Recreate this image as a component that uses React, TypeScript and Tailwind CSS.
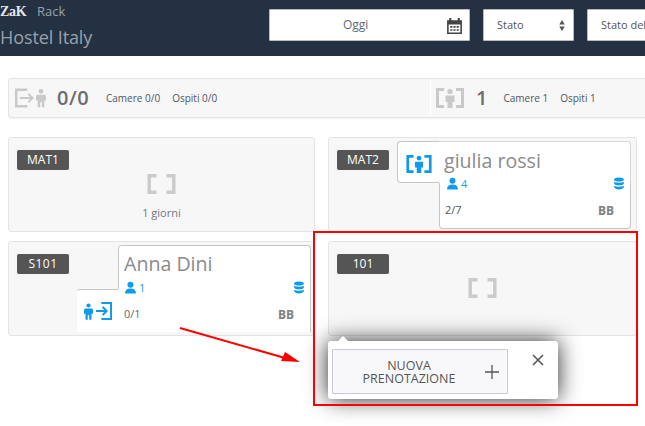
const font = "font-['Open_Sans',sans-serif]";

function Bracket({ className = "" }: { className?: string }) {
  return (
    <svg viewBox="0 0 28 20" className={className} fill="none" stroke="currentColor" strokeWidth="3.400">
      <path d="M9 1.700H1.700v16.600H9M19 1.700h7.300v16.600H19" />
    </svg>
  );
}

function PersonSolid({ className = "" }: { className?: string }) {
  return (
    <svg viewBox="0 0 12 22" className={className} fill="currentColor">
      <circle cx="6" cy="3" r="2.800" />
      <path d="M2 7h8a2 2 0 0 1 2 2v5h-2v8H7v-6H5v6H2v-8H0V9a2 2 0 0 1 2-2z" />
    </svg>
  );
}

function RoomIn({ className = "" }: { className?: string }) {
  return (
    <svg viewBox="0 0 28 20" className={className} fill="currentColor">
      <path d="M8 1.500H1.500v17H8M20 1.500h6.500v17H20" fill="none" stroke="currentColor" strokeWidth="3" />
      <circle cx="14" cy="3.500" r="2.600" />
      <path d="M9.500 7.500h9v6.500h-2V20h-5v-6h-2z" />
    </svg>
  );
}

function DoorOut({ className = "" }: { className?: string }) {
  return (
    <svg viewBox="0 0 20 20" className={className} fill="none" stroke="currentColor" strokeWidth="2.600">
      <path d="M13 1.300H1.300v17.400H13" />
      <path d="M5 10h13M14 5.500l4.500 4.500-4.500 4.500" strokeWidth="2" />
    </svg>
  );
}

function DoorIn({ className = "" }: { className?: string }) {
  return (
    <svg viewBox="0 0 18 20" className={className} fill="none" stroke="currentColor" strokeWidth="2.200">
      <path d="M6 1.100h10.900v17.800H6" />
      <path d="M0 10h12M7.500 5.500l4.500 4.500-4.500 4.500" />
    </svg>
  );
}

function User({ className = "" }: { className?: string }) {
  return (
    <svg viewBox="0 0 12 13" className={className} fill="currentColor">
      <circle cx="6" cy="3.500" r="3.300" />
      <path d="M0 13c0-3.500 2-5.500 6-5.500s6 2 6 5.500z" />
    </svg>
  );
}

function Stack({ className = "" }: { className?: string }) {
  return (
    <svg viewBox="0 0 10 12" className={className} fill="currentColor">
      <ellipse cx="5" cy="2" rx="4.800" ry="2" />
      <path d="M.2 4c1 1.600 8.600 1.600 9.600 0v2.200c-1 2-8.600 2-9.600 0zM.2 8c1 1.600 8.600 1.600 9.600 0v1.800C8.800 12.600 1.200 12.600.2 9.800z" />
    </svg>
  );
}

function Label({ text, wide = false }: { text: string; wide?: boolean }) {
  return (
    <div className="flex h-5 w-[52px] items-center justify-center rounded-[2px] bg-[#555] text-[12px] text-white">
      <span className={wide ? "tracking-[0.5px]" : ""}>{text}</span>
    </div>
  );
}

function Stats() {
  return (
    <div className="mx-2 mt-[22px] flex h-10 w-[660px] items-center rounded-[3px] border border-[#e4e4e4] bg-[#f7f7f7] shadow-[0_1px_1px_rgba(0,0,0,0.05)]">
      <div className="flex h-full w-[422px] shrink-0 items-center border-r border-white pl-[6px]">
        <DoorOut className="h-[20px] w-[19px] text-[#c9c9c9]" />
        <PersonSolid className="ml-[2px] h-[20px] w-[10px] text-[#c9c9c9]" />
        <span className="ml-[11px] w-[39px] text-[20px] font-semibold tracking-[0.5px] text-[#6d6d6d]">0/0</span>
        <span className="ml-[10px] text-[10px] text-[#4f5660]">Camere 0/0</span>
        <span className="ml-[12px] text-[10px] text-[#4f5660]">Ospiti 0/0</span>
      </div>
      <div className="flex items-center pl-[5px]">
        <RoomIn className="h-[20px] w-[28px] text-[#c9c9c9]" />
        <span className="ml-[12px] text-[20px] font-semibold text-[#6d6d6d]">1</span>
        <span className="ml-[16px] text-[10px] text-[#4f5660]">Camere 1</span>
        <span className="ml-[12px] text-[10px] text-[#4f5660]">Ospiti 1</span>
      </div>
    </div>
  );
}

function EmptyCard({ label, days }: { label: string; days?: string }) {
  return (
    <div className="flex h-[95px] flex-col rounded-[3px] border border-[#e4e4e4] bg-[#f7f7f7] pl-2 pt-3">
      <Label text={label} />
      <div className="flex flex-1 flex-col items-center pr-2 pt-1">
        <Bracket className="h-5 w-[29px] text-[#cbcbcb]" />
        {days && <span className="mt-[11px] text-[11px] text-[#6f7780]">{days}</span>}
      </div>
    </div>
  );
}

function MetaRow({ count }: { count: number }) {
  return (
    <div className="flex items-start pl-[7px] pr-[6px] text-[11px] leading-[13px] text-[#1a9fef]">
      <User className="h-[13px] w-[11px] text-[#0e9bec]" />
      <span className="ml-[3px]">{count}</span>
      <Stack className="ml-auto h-[13px] w-[10px] text-[#0e9bec]" />
    </div>
  );
}

function MatTwo() {
  return (
    <div className="flex h-[95px] rounded-[3px] border border-[#e4e4e4] bg-[#f7f7f7] pt-[3px]">
      <div className="pl-2 pt-[9px]">
        <Label text="MAT2" />
      </div>
      <div className="ml-[8px] grid h-[88px] w-[234px] grid-cols-[42px_1fr] grid-rows-[42px_1fr]">
        <div className="flex items-center justify-center rounded-l-[4px] border-y border-l border-[#c6c6c6] bg-white pt-[3px]">
          <RoomIn className="h-[18px] w-[26px] text-[#0e9bec]" />
        </div>
        <div className="rounded-tr-[4px] border-r border-t border-[#d8d8d8] bg-white pl-[5px] pt-[5px]">
          <div className="text-[19.600px] leading-[28px] text-[#8b8b8b]">giulia rossi</div>
        </div>
        <div className="relative col-start-2 rounded-b-[4px] border-x border-b border-[#c6c6c6] bg-white">
          <div className="-mt-[6px]">
            <MetaRow count={4} />
          </div>
          <div className="mt-[13px] flex items-center justify-between pl-[5px] pr-[16px]">
            <span className="-translate-y-[1px] text-[11px] leading-[16px] text-[#555]">2/7</span>
            <span className="text-[12px] font-bold leading-[16px] text-[#808080]">BB</span>
          </div>
        </div>
      </div>
    </div>
  );
}

function S101() {
  return (
    <div className="flex h-[95px] rounded-[3px] border border-[#e4e4e4] bg-[#f7f7f7] pt-[3px]">
      <div className="pl-2 pt-[9px]">
        <Label text="S101" wide />
      </div>
      <div className="ml-[8px] grid h-[87px] w-[234px] grid-cols-[41px_1fr] grid-rows-[44px_1fr]">
        <div className="col-start-2 rounded-t-[4px] border-x border-t border-[#c6c6c6] bg-white pl-[5px] pt-[3px]">
          <div className="text-[19.600px] leading-[30px] text-[#8b8b8b]">Anna Dini</div>
        </div>
        <div className="col-start-1 row-start-2 flex items-center rounded-tl-[3px] border-t border-[#c6c6c6] bg-white pl-[7px]">
          <PersonSolid className="h-[19px] w-[9px] text-[#0e9bec]" />
          <DoorIn className="ml-[3px] h-[18px] w-[16px] text-[#0e9bec]" />
        </div>
        <div className="col-start-2 row-start-2 border-r border-[#c6c6c6] bg-white">
          <div className="-mt-[8px]">
            <MetaRow count={1} />
          </div>
          <div className="mt-[13px] flex items-center justify-between pl-[6px] pr-[16px]">
            <span className="-translate-y-[1px] text-[11px] leading-[16px] text-[#666]">0/1</span>
            <span className="text-[12px] font-bold leading-[16px] text-[#808080]">BB</span>
          </div>
        </div>
      </div>
    </div>
  );
}

export default function App() {
  return (
    <div className={`relative h-[426px] w-[645px] overflow-hidden bg-white ${font}`}>
      <header className="flex h-14 bg-[#233143]">
        <div className="w-[269px] shrink-0 pt-[5px] leading-none text-[#9aa1a9]">
          <div className="flex items-baseline">
            <span className="w-[25px] font-['Liberation_Serif',serif] text-[14px] font-bold tracking-[-0.3px] text-[#e8e8e8]">ZaK</span>
            <span className="ml-[12px] text-[13px]">Rack</span>
          </div>
          <div className="mt-[9px] text-[18px] tracking-[-0.1px]">Hostel Italy</div>
        </div>
        <div className="flex items-start gap-[13px] pt-[9px]">
          <div className="flex h-8 w-[201px] items-center rounded-[1px] border border-[#bbb] bg-white pl-[73px] pr-[6px] text-[12px] text-[#5f6a76]">
            Oggi
            <svg viewBox="0 0 16 16" className="ml-auto h-[17px] w-[17px] text-[#444]" fill="currentColor">
              <path d="M1 3h2V1h2v2h6V1h2v2h2v13H1zm1.500 4v7.500h11V7zM4 8.500h2V10H4zm3 0h2V10H7zm3 0h2V10h-2zm-6 3h2V13H4zm3 0h2V13H7zm3 0h2V13h-2z" fillRule="evenodd" />
            </svg>
          </div>
          <div className="flex h-8 w-[91px] items-center rounded-[1px] border border-[#bbb] bg-white pl-[13px] pr-[8px] text-[11px] text-[#555]">
            Stato
            <svg viewBox="0 0 6 12" className="ml-auto h-[11px] w-[6px] text-[#555]" fill="currentColor">
              <path d="M3 0l3 5H0zM3 12L0 7h6z" />
            </svg>
          </div>
          <div className="flex h-8 w-[120px] shrink-0 items-center rounded-[1px] border border-[#bbb] bg-white pl-[13px] text-[11px] text-[#555]">
            Stato della camera
          </div>
        </div>
      </header>

      <Stats />

      <main className="mx-2 mt-[19px] grid w-[629px] grid-cols-[307px_309px] gap-x-[13px] gap-y-[9px]">
        <EmptyCard label="MAT1" days="1 giorni" />
        <MatTwo />
        <S101 />
        <EmptyCard label="101" />
      </main>

      {/* popover */}
      <div className="absolute left-[328px] top-[341px] flex h-[58px] w-[230px] rounded-[3px] bg-white pl-1 pt-2 shadow-[0_0_22px_rgba(0,0,0,0.85)]">
        <div className="absolute -top-[5px] left-[10px] h-0 w-0 border-x-[5px] border-b-[5px] border-x-transparent border-b-white" />
        <button className="flex h-[45px] w-[176px] items-center rounded-[1px] border border-[#c9c9d2] bg-[#f8f8fa] text-[12.500px] leading-[13px] text-[#555]">
          <span className="w-[152px] text-center">NUOVA<br />PRENOTAZIONE</span>
          <svg viewBox="0 0 14 14" className="h-[14px] w-[14px]" stroke="currentColor" strokeWidth="1.300">
            <path d="M7 0v14M0 7h14" />
          </svg>
        </button>
        <svg viewBox="0 0 12 12" className="ml-6 mt-[5px] h-3 w-3 text-[#555]" stroke="currentColor" strokeWidth="1.600">
          <path d="M1 1l10 10M11 1L1 11" />
        </svg>
      </div>

      {/* annotations */}
      <div className="pointer-events-none absolute left-[313px] top-[231px] h-[175px] w-[325px] border-2 border-[#f00]" />
      <svg className="pointer-events-none absolute left-0 top-0" width="645" height="426">
        <path d="M180 328l105 30" stroke="#f00" strokeWidth="2" />
        <path d="M300 362l-19-1 4-9z" fill="#f00" />
      </svg>
    </div>
  );
}
